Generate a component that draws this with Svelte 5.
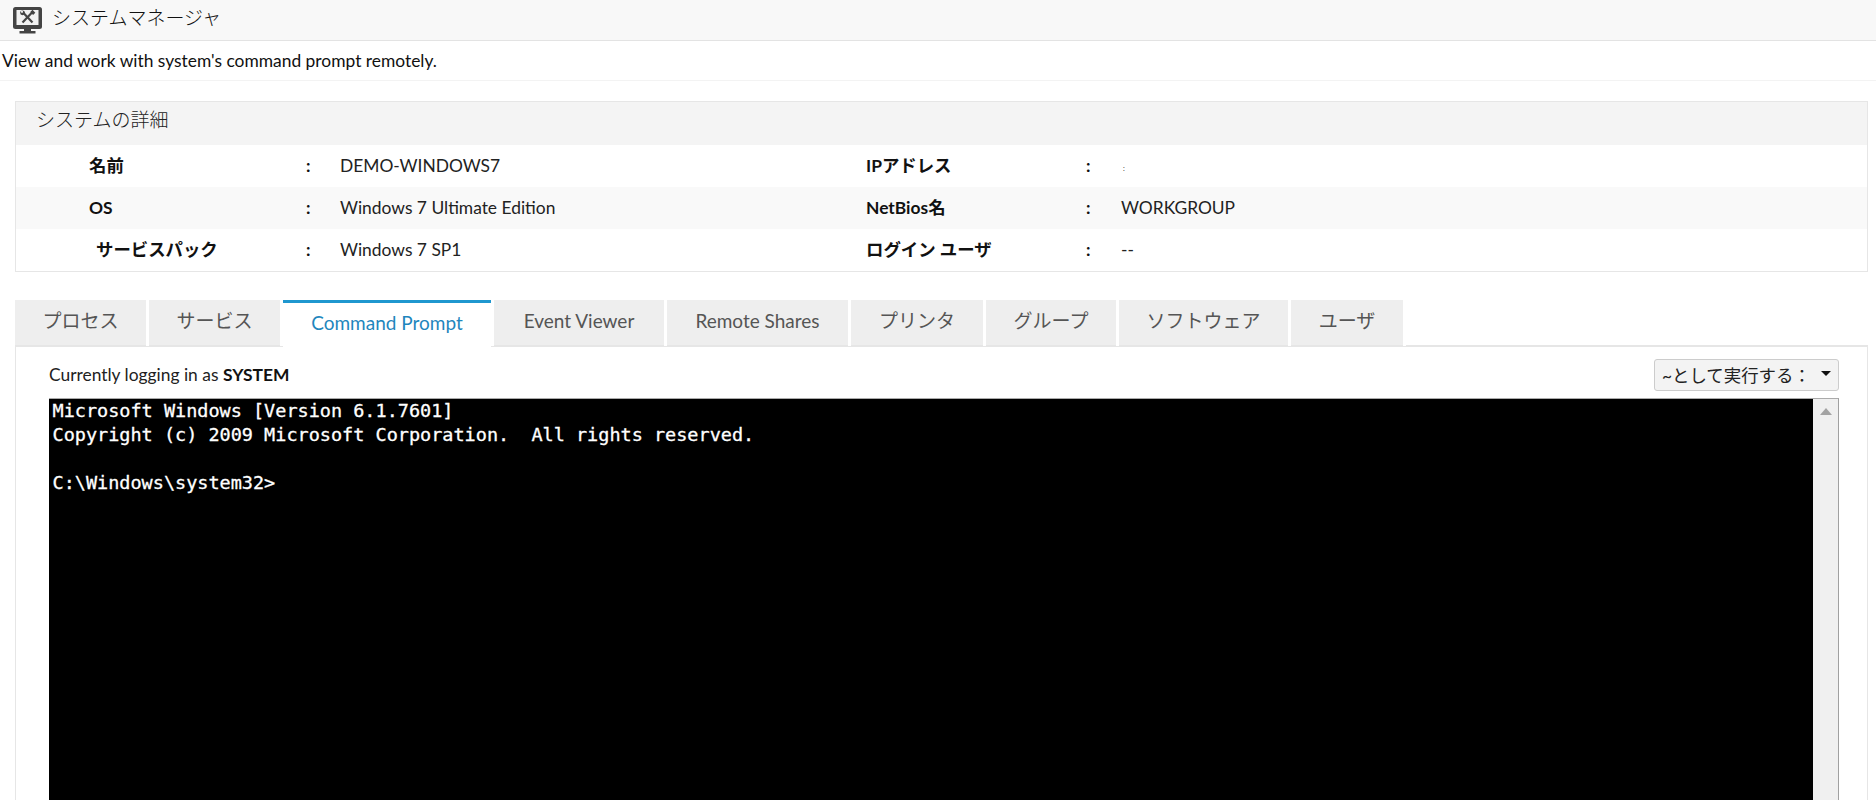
<script>
  const rows = [
    { a: '名前', b: 'DEMO-WINDOWS7', c: 'IPアドレス', d: '', cls: '' },
    { a: 'OS', b: 'Windows 7 Ultimate Edition', c: 'NetBios名', d: 'WORKGROUP', cls: 'alt' },
    { a: 'サービスパック', b: 'Windows 7 SP1', c: 'ログイン ユーザ', d: '--', cls: 'svc' }
  ];
  const tabs = ['プロセス', 'サービス', 'Command Prompt', 'Event Viewer', 'Remote Shares', 'プリンタ', 'グループ', 'ソフトウェア', 'ユーザ'];
</script>

<div class="page">
  <header class="top">
    <svg class="icon" viewBox="0 0 30 27" width="30" height="27" aria-hidden="true">
      <rect x="0" y="0" width="29" height="22" rx="2.500" fill="#444"/>
      <rect x="3.500" y="3" width="22" height="15" fill="#f2f2f2"/>
      <path d="M11 21h7v3h-7zM6.500 24h16V26.500h-16z" fill="#444"/>
      <path d="M10 5.500 L19.500 15.500" stroke="#444" stroke-width="2.200" fill="none"/>
      <path d="M19.500 5 L9.500 15.500" stroke="#444" stroke-width="2.200" fill="none"/>
      <circle cx="9.500" cy="5.800" r="2.400" fill="#444"/>
      <circle cx="9" cy="4.800" r="1.100" fill="#f2f2f2"/>
      <rect x="17.800" y="3.800" width="4" height="3.200" fill="#444" transform="rotate(45 19.800 5.400)"/>
    </svg>
    <span>システムマネージャ</span>
  </header>
  <div class="desc">View and work with system's command prompt remotely.</div>

  <section class="panel">
    <h2>システムの詳細</h2>
    {#each rows as r}
      <div class="row {r.cls}">
        <b class="first">{r.a}</b><b class="colon">:</b><span>{r.b}</span>
        <b>{r.c}</b><b class="colon">:</b>
        {#if r.d}<span>{r.d}</span>{:else}<span class="masked">:</span>{/if}
      </div>
    {/each}
  </section>

  <nav class="tabs">
    {#each tabs as t, i}
      <div class="tab t{i}" class:active={i === 2}>{t}</div>
    {/each}
    <div class="rest"></div>
  </nav>

  <section class="content">
    <div class="bar">
      <div class="login">Currently logging in as <b>SYSTEM</b></div>
      <div class="select"><span>~として実行する：</span><i class="caret"></i></div>
    </div>
    <div class="term">
      <pre>Microsoft Windows [Version 6.1.7601]
Copyright (c) 2009 Microsoft Corporation.  All rights reserved.

C:\Windows\system32&gt;</pre>
      <div class="scroll"><i class="up"></i></div>
    </div>
  </section>
</div>

<style>
  :global(body) { margin: 0; background: #fff; }
  .page {
    height: 800px;
    overflow: hidden;
    font-family: Lato, "Noto Sans CJK JP", sans-serif;
    font-size: 17.4px;
    color: #111;
    background: #fff;
  }
  .top {
    box-sizing: border-box;
    display: flex;
    align-items: center;
    gap: 9px;
    padding: 0 0 0 13px;
    background: #f8f8f8;
    border-bottom: 1px solid #e3e3e3;
    height: 41px;
    font-size: 19px;
    font-weight: 300;
    color: #111;
  }
  .icon { flex: none; margin-top: 1px; }
  .top span { margin-top: -8px; }
  .desc {
    height: 39px;
    line-height: 40px;
    padding-left: 2px;
    border-bottom: 1px solid #f3f3f3;
  }
  .panel {
    margin: 20px 8px 0 15px;
    border: 1px solid #e6e6e6;
    box-sizing: border-box;
  }
  h2 {
    margin: 0;
    height: 43px;
    line-height: 36px;
    padding-left: 20px;
    background: #f4f4f4;
    font-size: 19px;
    font-weight: 300;
    color: #222;
  }
  .row {
    height: 42px;
    display: grid;
    grid-template-columns: 217px 34px 526px 220px 35px 1fr;
    align-items: center;
    padding-left: 73px;
    box-sizing: border-box;
    line-height: 22px;
  }
  .row b { font-weight: 700; }
  .row span { color: #222; }
  .alt { background: #f9f9f9; }
  .svc .first { padding-left: 7px; }
  .masked { font-size: 7px; color: #c9a27a; padding-left: 2px; padding-top: 3px; }
  .tabs {
    display: flex;
    gap: 3px;
    margin: 28px 8px 0 15px;
    height: 47px;
  }
  .tab {
    box-sizing: border-box;
    height: 46px;
    line-height: 41px;
    text-align: center;
    background: #eeeeee;
    color: #555;
    font-size: 19px;
    font-weight: 400;
    border-bottom: 1px solid #e6e6e6;
    flex: none;
  }
  .t0, .t1 { width: 131px; }
  .t2 { width: 208px; }
  .t3 { width: 170px; }
  .t4 { width: 181px; }
  .t5 { width: 132px; }
  .t6 { width: 130px; }
  .t7 { width: 169px; }
  .t8 { width: 112px; }
  .active {
    height: 47px;
    line-height: 39px;
    background: #fff;
    color: #1f86bd;
    border-top: 3px solid #1f97cf;
    border-bottom: 0;
    position: relative;
    z-index: 1;
  }
  .rest { flex: 1; border-bottom: 1px solid #e6e6e6; height: 45px; align-self: flex-start; }
  .content {
    margin: -1px 8px 0 15px;
    border-left: 1px solid #e6e6e6;
    border-right: 1px solid #e6e6e6;
    border-top: 1px solid #e6e6e6;
    padding: 12px 28px 0 33px;
    height: 460px;
    box-sizing: border-box;
  }
  .bar { display: flex; justify-content: space-between; align-items: center; height: 32px; margin-bottom: 7px; }
  .login { color: #222; margin-top: -2px; }
  .login b { color: #111; }
  .select {
    box-sizing: border-box;
    width: 185px;
    height: 32px;
    display: flex;
    align-items: center;
    justify-content: space-between;
    padding: 0 7px 0 7px;
    background: #f3f3f3;
    border: 1px solid #ccc;
    border-radius: 3px;
    color: #222;
  }
  .select span { margin-top: -2px; font-size: 17.4px; }
  .caret {
    width: 0; height: 0;
    margin-top: -3px;
    border-left: 5.500px solid transparent;
    border-right: 5.500px solid transparent;
    border-top: 5px solid #111;
  }
  .term {
    display: flex;
    height: 420px;
    background: #000;
    border-top: 1px solid #aaa;
    border-right: 1px solid #a0a0a0;
  }
  pre {
    flex: 1;
    margin: 0;
    padding: 0 0 0 3.500px;
    color: #fff;
    font-family: "DejaVu Sans Mono", monospace;
    font-size: 18.5px;
    line-height: 24px;
    -webkit-text-stroke: 0.3px #fff;
  }
  .scroll { width: 25px; background: #f0f0f0; display: flex; justify-content: center; padding-top: 9px; box-sizing: border-box; }
  .up {
    width: 0; height: 0;
    border-left: 6px solid transparent;
    border-right: 6px solid transparent;
    border-bottom: 7px solid #a3a3a3;
  }
</style>
